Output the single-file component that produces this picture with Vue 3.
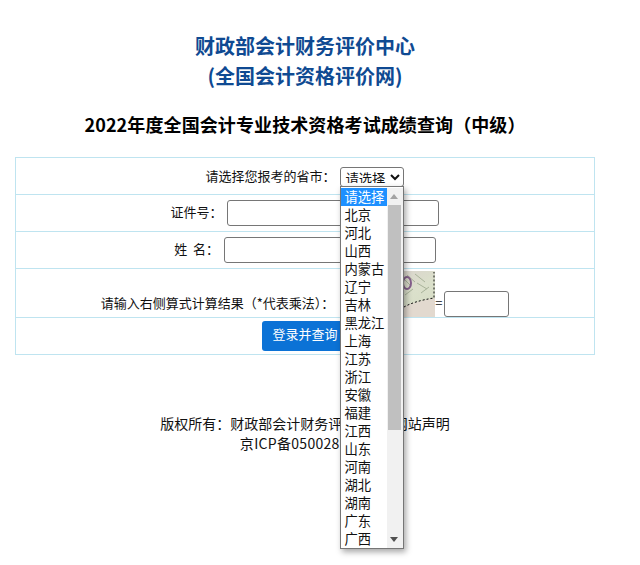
<script setup>
const provinces = ['请选择','北京','河北','山西','内蒙古','辽宁','吉林','黑龙江','上海','江苏','浙江','安徽','福建','江西','山东','河南','湖北','湖南','广东','广西']
</script>

<template>
  <div class="page">
    <h1 class="org">财政部会计财务评价中心<br />(全国会计资格评价网)</h1>
    <h2 class="exam">2022年度全国会计专业技术资格考试成绩查询&#xFF08;中级&#xFF09;</h2>
    <table class="form">
      <tbody>
        <tr>
          <td>
            <span class="lift">请选择您报考的省市&#xFF1A;</span> <span class="select-wrap">
              <select class="province"><option>请选择</option></select>
              <div class="popup">
                <ul class="list">
                  <li v-for="(p, i) in provinces" :key="p" :class="{ on: i === 0 }">{{ p }}</li>
                </ul>
                <div class="bar">
                  <span class="up"></span>
                  <span class="thumb"></span>
                  <span class="down"></span>
                </div>
              </div>
            </span>
          </td>
        </tr>
        <tr><td>证件号&#xFF1A; <input class="field" type="text" /></td></tr>
        <tr><td>姓&nbsp;&nbsp;名&#xFF1A; <input class="field" type="text" /></td></tr>
        <tr class="tall">
          <td>
            请输入右侧算式计算结果&#xFF08;*代表乘法&#xFF09;&#xFF1A; <svg class="captcha" width="90" height="46" viewBox="0 0 90 46">
              <defs>
                <linearGradient id="cap" x1="0" y1="0" x2="1" y2="1">
                  <stop offset="0" stop-color="#d9c9cf" />
                  <stop offset="0.6" stop-color="#dbe0cb" />
                  <stop offset="1" stop-color="#d5dcc4" />
                </linearGradient>
              </defs>
              <rect width="90" height="46" fill="#e2d9cf" />
              <path d="M0 0H90V27C75 30 66 32 58 36L0 46Z" fill="url(#cap)" />
              <path d="M59 8l6 6M62 4l8 7M60 24l8-6M70 3l10 8M72 12l10 6M76 22l8-6" stroke="#a9b39a" stroke-width="1" fill="none" />
              <ellipse cx="62" cy="12" rx="4" ry="6" fill="none" stroke="#85608c" stroke-width="2" />
              <path d="M59 36C66 32 76 29 89 27V1" stroke="#111" stroke-width="1" stroke-dasharray="2 2" fill="none" />
            </svg><span class="eq">=</span><input class="field small" type="text" />
          </td>
        </tr>
        <tr><td><button class="submit" type="button">登录并查询</button></td></tr>
      </tbody>
    </table>
    <div class="footer">
      <p>版权所有&#xFF1A;财政部会计财务评价中心&nbsp;&nbsp;&nbsp;网站声明</p>
      <p class="icp">京ICP备05002812号</p>
    </div>
  </div>
</template>

<style>
html, body { margin: 0; background: #fff; }
</style>

<style scoped>
.page {
  width: 610px;
  min-height: 565px;
  font-family: "Noto Sans CJK SC", "Noto Sans", sans-serif;
  font-size: 13px;
  line-height: 20px;
  color: #111;
  text-align: center;
}
.org {
  margin: 0;
  padding-top: 31px;
  font-size: 20px;
  line-height: 30px;
  font-weight: 700;
  color: #0f4a92;
}
.exam {
  margin: 18px 0 0;
  font-size: 18px;
  line-height: 30px;
  font-weight: 700;
  letter-spacing: 0.1px;
  color: #000;
}
.form {
  width: 580px;
  margin: 18px auto 0;
  border-collapse: collapse;
}
.form td {
  height: 36px;
  padding: 0;
  border: 1px solid #bfe4f0;
  text-align: center;
  vertical-align: middle;
}
.form .tall td {
  height: 48px;
  vertical-align: bottom;
}
.lift {
  vertical-align: -1px;
}
.select-wrap {
  position: relative;
  display: inline-block;
  vertical-align: middle;
  height: 20px;
  margin-left: 2px;
}
.province {
  display: block;
  box-sizing: border-box;
  width: 64px;
  height: 20px;
  padding: 0 0 3px;
  font: 13.33px/16px "Noto Sans CJK SC", sans-serif;
  color: #111;
  background: #fff;
  border: 1px solid #767676;
  border-radius: 3px;
}
.popup {
  position: absolute;
  top: 19px;
  left: 0;
  z-index: 5;
  display: flex;
  box-sizing: border-box;
  width: 64px;
  height: 363px;
  padding-top: 1px;
  background: #fff;
  border: 1px solid #767676;
  box-shadow: 2px 3px 6px rgba(0, 0, 0, 0.35);
  text-align: left;
}
.list {
  flex: 1;
  margin: 0;
  padding: 0;
  list-style: none;
  overflow: hidden;
}
.list li {
  height: 18px;
  padding-left: 3px;
  font-size: 13.33px;
  line-height: 18px;
  color: #111;
}
.list li.on {
  color: #fff;
  background: #1e90ff;
}
.bar {
  position: relative;
  width: 16px;
  background: #f1f1f1;
}
.thumb {
  position: absolute;
  top: 17px;
  left: 1px;
  width: 13px;
  height: 225px;
  background: #c0c0c0;
}
.up, .down {
  position: absolute;
  left: 3px;
  width: 0;
  height: 0;
  border-left: 4px solid transparent;
  border-right: 4px solid transparent;
}
.up { top: 6px; border-bottom: 5px solid #a3a3a3; }
.down { bottom: 6px; border-top: 5px solid #505050; }
.field {
  box-sizing: border-box;
  width: 212px;
  height: 26px;
  margin-left: 2px;
  padding: 1px 2px;
  vertical-align: middle;
  background: #fff;
  border: 1px solid #767676;
  border-radius: 3px;
}
.field.small {
  width: 65px;
  margin-left: 0;
  vertical-align: bottom;
}
.captcha {
  margin-left: 8px;
  vertical-align: -9px;
}
.eq {
  display: inline-block;
  width: 9px;
  text-align: left;
}
.submit {
  display: block;
  width: 86px;
  height: 30px;
  margin: 0 auto;
  padding: 0 0 5px;
  font: 13px/25px "Noto Sans CJK SC", sans-serif;
  color: #fff;
  background: #0b72d6;
  border: 0;
  border-radius: 3px;
}
.footer {
  margin-top: 58px;
  font-size: 14px;
  line-height: 20px;
}
.footer p {
  margin: 0;
}
.icp {
  letter-spacing: 0.3px;
}
</style>
